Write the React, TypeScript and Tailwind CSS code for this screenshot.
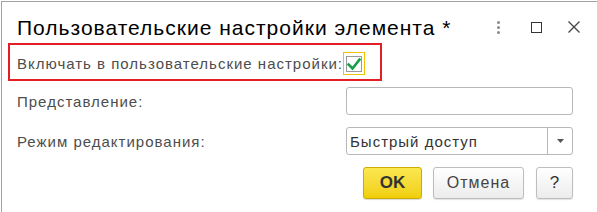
import React from 'react';

const font = { fontFamily: '"Liberation Sans", Arial, sans-serif' };

function CheckMark() {
  return (
    <svg width="14" height="14" viewBox="0 0 14 14" className="block">
      <path d="M1.5 7.5 L5.5 11.5 L12.5 2.5" fill="none" stroke="#17a04a" strokeWidth="2.6" strokeLinecap="square" />
    </svg>
  );
}

export default function App() {
  return (
    <div className="w-[597px] h-[212px] bg-white overflow-hidden pt-px pl-px" style={font}>
      <div className="h-full border-t border-l border-[#a3a3a3] bg-white">
        {/* Title bar */}
        <div className="flex items-center mt-[14px] h-[24px]">
          <div className="ml-[15px] text-[21px] leading-[24px] tracking-[1px] text-black whitespace-nowrap">
            Пользовательские настройки элемента *
          </div>
          <div className="ml-auto flex items-center pr-[17px] -mt-[2px]">
            <div className="flex flex-col gap-[2px]">
              <span className="w-[3px] h-[3px] rounded-full bg-[#8a8a8a]" />
              <span className="w-[3px] h-[3px] rounded-full bg-[#8a8a8a]" />
              <span className="w-[3px] h-[3px] rounded-full bg-[#8a8a8a]" />
            </div>
            <div className="ml-[31px] w-[11px] h-[11px] border-[1.5px] border-[#333]" />
            <svg width="12" height="12" viewBox="0 0 12 12" className="ml-[26px]">
              <path d="M0.5 0.5 L11.5 11.5 M11.5 0.5 L0.5 11.5" stroke="#444" strokeWidth="1.3" />
            </svg>
          </div>
        </div>

        {/* Highlighted checkbox row */}
        <div className="mt-[3px] ml-[6px] w-[374px] h-[38px] border-2 border-[#e31e24] flex items-center pt-[3px] pl-[7px]">
          <div className="w-[326px] text-[15px] leading-[17px] tracking-[1px] text-[#4d4d4d] whitespace-nowrap">
            Включать в пользовательские настройки:
          </div>
          <div className="w-[22px] h-[23px] border border-[#f2c200] flex items-center justify-center">
            <div className="w-[16px] h-[16px] border border-[#9a9a9a] bg-white flex items-center justify-center">
              <CheckMark />
            </div>
          </div>
        </div>

        {/* Представление */}
        <div className="mt-[6px] flex items-center">
          <div className="w-[344px] pl-[15px] text-[15px] leading-[17px] tracking-[1px] text-[#4d4d4d] whitespace-nowrap">
            Представление:
          </div>
          <div className="w-[227px] h-[28px] border border-[#b8b8b8] rounded-[3px] bg-white" />
        </div>

        {/* Режим редактирования */}
        <div className="mt-[12px] flex items-center">
          <div className="w-[344px] pl-[15px] text-[15px] leading-[17px] tracking-[1px] text-[#4d4d4d] whitespace-nowrap">
            Режим редактирования:
          </div>
          <div className="w-[227px] h-[28px] border border-[#b8b8b8] rounded-[3px] bg-white flex items-stretch">
            <div className="flex-1 flex items-center pl-[3px] text-[15px] leading-[17px] tracking-[1px] text-[#333]">
              Быстрый доступ
            </div>
            <div className="w-[25px] border-l border-[#b8b8b8] flex items-center justify-center">
              <svg width="7" height="4" viewBox="0 0 7 4">
                <path d="M0 0 L7 0 L3.5 4 Z" fill="#555" />
              </svg>
            </div>
          </div>
        </div>

        {/* Buttons */}
        <div className="mt-[12px] flex items-center ml-[361px]">
          <button className="w-[59px] h-[32px] rounded-[3px] border border-[#c9ad00] bg-gradient-to-b from-[#fbe74f] to-[#f0cf00] text-[17px] font-bold text-[#333] shadow-[0_1px_1px_rgba(0,0,0,0.15)]">
            OK
          </button>
          <button className="ml-[11px] w-[91px] h-[32px] rounded-[3px] border border-[#bdbdbd] bg-gradient-to-b from-white to-[#ececec] text-[16px] tracking-[1px] text-[#444] shadow-[0_1px_1px_rgba(0,0,0,0.12)]">
            Отмена
          </button>
          <button className="ml-[12px] w-[37px] h-[32px] rounded-[3px] border border-[#bdbdbd] bg-gradient-to-b from-white to-[#ececec] text-[17px] text-[#333] shadow-[0_1px_1px_rgba(0,0,0,0.12)]">
            ?
          </button>
        </div>
      </div>
    </div>
  );
}
